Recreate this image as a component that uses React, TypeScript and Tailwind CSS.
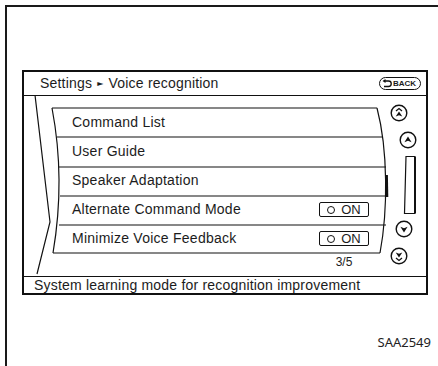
import React from "react";

type Row = { label: string; toggle?: boolean };

const rows: Row[] = [
  { label: "Command List" },
  { label: "User Guide" },
  { label: "Speaker Adaptation" },
  { label: "Alternate Command Mode", toggle: true },
  { label: "Minimize Voice Feedback", toggle: true },
];

// row separators: [y, x on left curve, x on right curve]
const lines = [
  [12, 28, 353],
  [41, 33, 359],
  [71, 35, 362],
  [100, 36, 363],
  [129, 35, 362],
  [157, 29, 356],
];

function RoundButton({ up, double }: { up: boolean; double?: boolean }) {
  return (
    <svg width="18" height="18" viewBox="0 0 18 18" className="block">
      <circle cx="9" cy="9" r="7.8" fill="white" stroke="#111" strokeWidth="1.4" />
      <g transform={up ? undefined : "rotate(180 9 9)"}>
        {double ? (
          <>
            <path d="M6 7 L9 4.6 L12 7" fill="none" stroke="#111" strokeWidth="1.3" />
            <path d="M9 7.6 L12.3 12.6 L9 11.2 L5.7 12.6 Z" fill="#111" />
          </>
        ) : (
          <path d="M9 5.6 L12.6 11.2 L9 9.8 L5.4 11.2 Z" fill="#111" />
        )}
      </g>
    </svg>
  );
}

function Toggle() {
  return (
    <div className="flex h-[15px] w-[50px] items-center justify-center gap-[6px] rounded-[2px] border-[1.5px] border-[#111] text-[13px] leading-none">
      <span className="h-[8px] w-[8px] rounded-full border-[1.5px] border-[#111]" />
      <span>ON</span>
    </div>
  );
}

export default function App() {
  return (
    <div className="h-[366px] w-[438px] bg-white pl-[5px] pt-[5px] font-['Liberation_Sans',Arial,sans-serif] text-[#1c1c1c]">
      <div className="h-[361px] border-l-2 border-t-2 border-[#1a1a1a] pl-[15px] pt-[63px]">
        <div className="w-[406px] border-2 border-[#111]">
          {/* header */}
          <div className="flex h-[24px] items-center justify-between border-b border-[#111] pl-[16px] pr-[5px] text-[14px] tracking-[0.2px]">
            <div className="flex items-center">
              <span>Settings</span>
              <span className="mx-[5px] font-['DejaVu_Sans',sans-serif] text-[8px]">►</span>
              <span>Voice recognition</span>
            </div>
            <div className="flex h-[13px] items-center gap-[1px] rounded-full border border-[#111] pl-[2px] pr-[4px] tracking-normal">
              <svg width="10" height="9" viewBox="0 0 10 9" className="block">
                <path d="M3 2 H6.5 A2.6 2.6 0 0 1 6.5 7.5 H2" fill="none" stroke="#111" strokeWidth="1.3" />
                <path d="M0.5 2 L3.5 0 V4 Z" fill="#111" />
              </svg>
              <span className="text-[8px] font-bold leading-none">BACK</span>
            </div>
          </div>

          {/* body */}
          <div className="flex h-[180px]">
            <div className="relative w-[366px] pt-[12px]">
              <svg width="366" height="180" className="absolute left-0 top-0" fill="none" stroke="#111">
                <path d="M11 -1 L26 126 L13 178" strokeWidth="1.2" />
                <path d="M28 12 C36 54 38 104 29 157" strokeWidth="1.2" />
                <path d="M353 12 C364 54 364 114 356 157" strokeWidth="1.2" />
                <path d="M362.6 79 L363 101" strokeWidth="2.6" />
                {lines.map(([y, x1, x2]) => (
                  <line key={y} x1={x1} y1={y} x2={x2} y2={y} strokeWidth="1.2" />
                ))}
              </svg>
              <div className="relative">
                {rows.map((r) => (
                  <div key={r.label} className="flex h-[29px] items-center justify-between pl-[48px] pr-[21px] text-[14px]">
                    <span className="tracking-[0.25px]">{r.label}</span>
                    {r.toggle && <Toggle />}
                  </div>
                ))}
                <div className="flex justify-end pr-[21px] pt-[2px]">
                  <span className="w-[50px] text-center text-[12px] leading-[14px]">3/5</span>
                </div>
              </div>
            </div>

            <div className="flex w-[36px] flex-col pt-[8px]">
              <div className="ml-0">
                <RoundButton up double />
              </div>
              <div className="ml-[9px] mt-[9px]">
                <RoundButton up />
              </div>
              <div className="ml-[13px] mt-[6px]">
                <svg width="14" height="60" viewBox="0 0 14 60" className="block" fill="none" stroke="#111">
                  <path d="M3 1.5 H12 V58.5 H1.5 Z" strokeWidth="1.2" />
                  <path d="M12 2 V58" strokeWidth="2" />
                </svg>
              </div>
              <div className="ml-[5px] mt-[5px]">
                <RoundButton up={false} />
              </div>
              <div className="ml-0 mt-[9px]">
                <RoundButton up={false} double />
              </div>
            </div>
          </div>

          {/* footer */}
          <div className="flex h-[17px] items-center border-t border-[#111] pl-[10px] text-[14px] leading-none tracking-[0.2px]">
            System learning mode for recognition improvement
          </div>
        </div>

        <div className="mt-[38px] flex justify-end pr-[7px] font-['Noto_Sans',sans-serif] text-[13px] text-[#222]">
          SAA2549
        </div>
      </div>
    </div>
  );
}
